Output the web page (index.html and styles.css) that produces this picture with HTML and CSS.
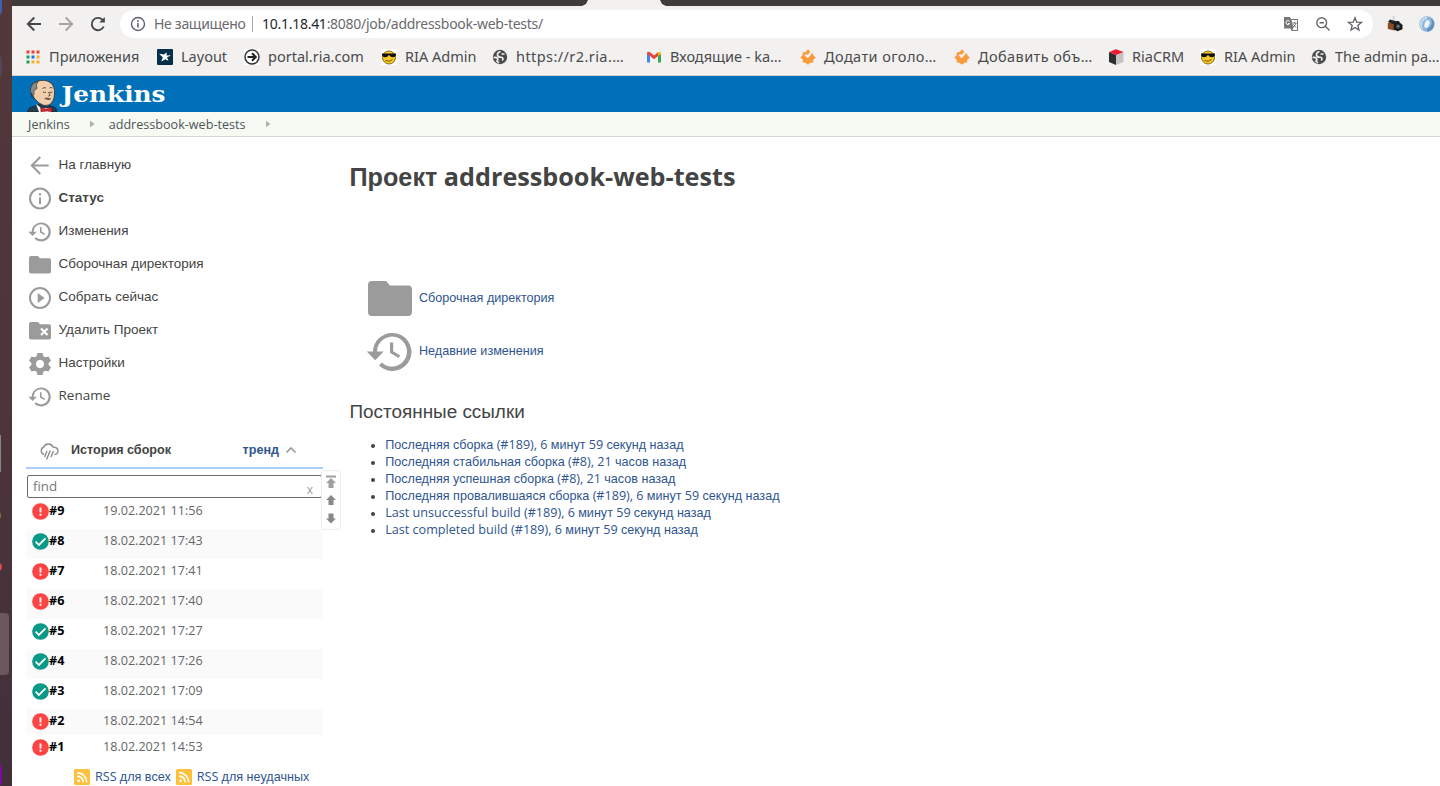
FILE: index.html
```html
<!DOCTYPE html>
<html lang="ru">
<head>
<meta charset="utf-8">
<title>addressbook-web-tests [Jenkins]</title>
<link rel="stylesheet" href="styles.css">
</head>
<body>
<svg width="0" height="0" class="defs">
  <symbol id="history" viewBox="0 0 24 24"><path d="M13 2.500A9.500 9.500 0 0 0 3.500 11.700H.4l4.200 4.400 4.200-4.400H5.500a7.500 7.500 0 1 1 2.400 5.600L6.500 18.700A9.500 9.500 0 1 0 13 2.500zM12 7.200v5.200l4.300 2.600.8-1.300-3.500-2.100V7.200z"/></symbol>
  <symbol id="folder" viewBox="0 0 24 24"><path d="M10 3H3a2 2 0 0 0-2 2v13.500a2 2 0 0 0 2 2h18a2 2 0 0 0 2-2V7.200a2 2 0 0 0-2-2h-9z"/></symbol>
  <symbol id="fail" viewBox="0 0 18 18"><circle cx="9" cy="9" r="8.800" fill="#fd4444"/><path d="M8 4.700h2v5.400H8zM8 11.400h2v2H8z" fill="#fff"/></symbol>
  <symbol id="ok" viewBox="0 0 18 18"><circle cx="9" cy="9" r="8.800" fill="#0a9887"/><path d="M3.800 9.200l3.500 3.400 7-7" fill="none" stroke="#fff" stroke-width="1.900"/></symbol>
  <symbol id="rss" viewBox="0 0 16 16"><rect width="16" height="16" rx="1.500" fill="#ffc03c"/><circle cx="4.600" cy="11.800" r="1.400" fill="#fff"/><path d="M3.200 7.200a6 6 0 0 1 6 6M3.200 3.700a9.500 9.500 0 0 1 9.500 9.500" fill="none" stroke="#fff" stroke-width="1.700"/></symbol>
  <symbol id="shades" viewBox="0 0 16 16"><rect width="16" height="16" fill="#fff"/><circle cx="8" cy="8.500" r="6.500" fill="#f6c928" stroke="#8a6a12"/><path d="M1 4.500h14v1.500c-.5 2.800-5.500 3-6.500.3h-1C6.500 9 1.500 8.800 1 6z" fill="#111"/><path d="M4.500 11.500q4 2 7-1" stroke="#7b4f0a" fill="none"/></symbol>
  <symbol id="globe" viewBox="0 0 16 16"><circle cx="8" cy="8" r="7.200" fill="#4a4b4d"/><path d="M8.500 2.500Q5 3.500 5.500 6t4 2.200q2.500.8.800 3.300M1.500 8.500q3-.5 4 1t-.5 2.500L7 14M9.500 5h3" fill="none" stroke="#f2f1f0" stroke-width="1.600"/></symbol>
  <symbol id="ria" viewBox="0 0 16 16"><path d="M8 .3l2.400 2.400L7.500 6 6 5 4.500 6.600l3.300 2.600L12.600 3.800l1.100 3 2.200 1.800-2.400 2-.4 2.800-2.700.3L8 15.800l-2.700-2-2.600-.4.1-3L.2 8.500 2.500 6.400l.2-2.900 3-.5z" fill="#f99b3c"/></symbol>
</svg>

<div class="screen">
  <aside class="dock">
    <i class="dot blue"></i><i class="dot slate"></i><i class="dot pale"></i><i class="dot gold"></i><i class="dot red"></i><i class="active"></i><i class="dot violet"></i>
  </aside>
  <div class="window">
    <div class="tabs"><div class="tab"></div></div>
    <div class="toolbar">
      <svg class="nav" viewBox="0 0 16 16"><path d="M15 8H2M8.300 1.500L1.800 8l6.500 6.500"/></svg>
      <svg class="nav off" viewBox="0 0 16 16"><path d="M1 8h13M7.700 1.500L14.200 8l-6.500 6.500"/></svg>
      <svg class="nav" viewBox="0 0 16 16"><path d="M13.700 10.500A6.200 6.200 0 1 1 12.400 3.700L14 5.300"/><path d="M14.800 1v5.500H9.300z" class="solid"/></svg>
      <div class="address">
        <svg class="i16" viewBox="0 0 16 16"><circle cx="8" cy="8" r="6.500" fill="none" stroke="#5f6368" stroke-width="1.400"/><path d="M7.200 7h1.600v4.500H7.200zM7.200 4.300h1.600v1.600H7.200z" fill="#5f6368"/></svg>
        <span class="warn">Не защищено</span>
        <span class="url"><b>10.1.18.41</b>:8080/job/addressbook-web-tests/</span>
        <svg class="i16" viewBox="0 0 16 16"><path d="M1 1h6l1 2h7v12H8.500l-1-2.500H1z" fill="#777"/><path d="M8.500 4H14v10H9.500L10.500 12z" fill="#fff"/><path d="M9.500 7h4M11.500 6v1M13 7q-.5 2.500-3 4M10.500 8.500l2.500 3" fill="none" stroke="#666" stroke-width=".9"/><path d="M6.500 5.300a2 2 0 1 0 .2 2.300H5" fill="none" stroke="#fff"/></svg>
        <svg class="i16" viewBox="0 0 16 16"><circle cx="6.700" cy="6.700" r="4.900" fill="none" stroke="#666" stroke-width="1.400"/><path d="M10.300 10.300l4.200 4.200M4.500 6.700h4.500" stroke="#666" stroke-width="1.400"/></svg>
        <svg class="i16" viewBox="0 0 16 16"><path d="M8 1.800l1.700 4.300 4.700.3-3.600 3 1.200 4.600L8 11.500 4 14l1.200-4.600-3.600-3 4.700-.3z" fill="none" stroke="#5f6368" stroke-width="1.300"/></svg>
      </div>
      <svg class="ext" viewBox="0 0 16 16"><path d="M5.500 0h2.500v5H5.500z" fill="#d5d9e2"/><path d="M.8 7l5-1 2 2v6.500l-7-1.500z" fill="#8a4c25"/><path d="M1 6l2-2.500 5 1.500 4 0 1 2-6 1.500z" fill="#222"/><path d="M7 7l7 .3 1.500 2v4l-5 2-4-2z" fill="#1c1d21"/><circle cx="10.800" cy="10.500" r="3.200" fill="#333" stroke="#111"/><circle cx="11.200" cy="10.200" r="1.300" fill="#778"/></svg>
      <svg class="ext" viewBox="0 0 16 16"><circle cx="8" cy="8" r="7.700" fill="#8db5d8"/><path d="M8 .5a7.500 7.500 0 0 0-4 13.500Q1 5 8 3z" fill="#bfd9ed"/><path d="M8 15.500A7.500 7.500 0 0 0 12 2q3 8-4 11z" fill="#5f8fbb"/><ellipse cx="8" cy="8" rx="2.400" ry="4" fill="#eef4fa" transform="rotate(20 8 8)"/></svg>
    </div>
    <nav class="bookmarks">
      <a><svg class="i16" viewBox="0 0 16 16"><path d="M1.500 1.500h3v3h-3zM6.500 1.500h3v3h-3zM11.500 1.500h3v3h-3z" fill="#ea4335"/><path d="M1.500 6.500h3v3h-3zM1.500 11.500h3v3h-3z" fill="#1e9e55"/><path d="M6.500 6.500h3v3h-3z" fill="#1a73e8"/><path d="M11.500 6.500h3v3h-3zM6.500 11.500h3v3h-3zM11.500 11.500h3v3h-3z" fill="#fbb023"/></svg><span>Приложения</span></a>
      <a><svg class="i16" viewBox="0 0 16 16"><rect width="16" height="16" rx="1" fill="#06304a"/><path d="M2 4.800l4.700.6L10 3.500l-.6 3 4.600-.2-4 2.200 1.500 3.300-3.200-1.600L4.300 12.500l1.500-4.300z" fill="#fff"/></svg><span>Layout</span></a>
      <a><svg class="i16" viewBox="0 0 16 16"><rect width="16" height="16" fill="#fff"/><circle cx="8" cy="8" r="7" fill="none" stroke="#333" stroke-width="1.500"/><path d="M3.500 8h8M8 4.200L11.800 8 8 11.800" fill="none" stroke="#222" stroke-width="2"/></svg><span>portal.ria.com</span></a>
      <a><svg class="i16"><use href="#shades"/></svg><span>RIA Admin</span></a>
      <a><svg class="i16"><use href="#globe"/></svg><span class="wide">https://r2.ria.…</span></a>
      <a><svg class="i16" viewBox="0 0 16 16"><path d="M1 4v9.500h3V6z" fill="#4285f4"/><path d="M15 4v9.500h-3V6z" fill="#34a853"/><path d="M1 4.200Q1.500 2 4 3.200L8 6.500l4-3.300V7L8 10.200 4 7 1 5z" fill="#ea4335"/><path d="M12 3.200Q14.500 2 15 4.200V5l-3 2z" fill="#fbbc04"/></svg><span>Входящие - ka…</span></a>
      <a><svg class="i16"><use href="#ria"/></svg><span class="wide">Додати оголо…</span></a>
      <a><svg class="i16"><use href="#ria"/></svg><span class="wide">Добавить объ…</span></a>
      <a><svg class="i16" viewBox="0 0 16 16"><path d="M1 3l7 3v10l-7-3z" fill="#2d2d2d"/><path d="M15.500 3L8 6v10l7.500-3z" fill="#c3c3c3"/><path d="M1 3l7-2.700L15.500 3 8 6z" fill="#ed1b2f"/></svg><span>RiaCRM</span></a>
      <a><svg class="i16"><use href="#shades"/></svg><span>RIA Admin</span></a>
      <a><svg class="i16"><use href="#globe"/></svg><span>The admin pa…</span></a>
    </nav>

    <header class="header">
      <svg class="logo" viewBox="0 0 144 36">
        <path d="M.7 36q0-4.500 6-5.500l5-2 10 1 5 1.500q3 1 3 5z" fill="#213d4f" stroke="#182129" stroke-width=".8"/>
        <path d="M9 28l5 4 7 0 3 0v4H12z" fill="#fff"/>
        <path d="M5 17Q2 7 10 5.500q8-3 14 1.500 4 4 3.500 11-.5 8-5.500 11-5 2-10-2l-5-5z" fill="#f1cfac" stroke="#302b28" stroke-width=".8"/>
        <path d="M11 5.500q-8 1.500-7.500 10l2 4.500 1.500-1.500 0-4 3-2-.5-4z" fill="#8b8b86" stroke="#302b28" stroke-width=".6"/>
        <path d="M5 17q-2 5 2.500 5M15.500 12.500q1.500-1.500 3.500-.5M22.500 12q1.500-1 3 0M16 16q1.500 1 3 .2M22.500 16q1.500 1 3 0M21.500 16l1.700 3.500-2 .6" fill="none" stroke="#302b28" stroke-width=".8"/>
        <path d="M17 23q2-2.500 4.500-1l3 .5q-2.500 2.500-4.500 1z" fill="#6b5444"/>
        <path d="M13.500 31.500l5.500 1.500 5-1.500 1 4.500-5-1-6 1z" fill="#d92532" stroke="#7f1820" stroke-width=".5"/>
        <text x="34.500" y="25.500" textLength="104" lengthAdjust="spacingAndGlyphs">Jenkins</text>
      </svg>
    </header>
    <nav class="crumbs"><a>Jenkins</a><i></i><a>addressbook-web-tests</a><i></i></nav>

    <div class="page">
      <aside class="side">
        <ul class="tasks">
          <li><svg viewBox="0 0 24 24"><path d="M20.700 11.500H4M12.300 3L3.800 11.500l8.500 8.500" class="line"/></svg><a>На главную</a></li>
          <li><svg viewBox="0 0 24 24"><circle cx="12" cy="11.500" r="10" class="line"/><path d="M11 10.500h2V17h-2zM11 6.300h2v2.200h-2z"/></svg><a><strong>Статус</strong></a></li>
          <li><svg><use href="#history"/></svg><a>Изменения</a></li>
          <li><svg><use href="#folder"/></svg><a>Сборочная директория</a></li>
          <li><svg viewBox="0 0 24 24"><circle cx="12" cy="12" r="10" class="line"/><path d="M9.700 7v10l7-5z"/></svg><a>Собрать сейчас</a></li>
          <li><svg viewBox="0 0 24 24"><path d="M10 3H3a2 2 0 0 0-2 2v13.500a2 2 0 0 0 2 2h18a2 2 0 0 0 2-2V7.200a2 2 0 0 0-2-2h-9z"/><path d="M13 9.500l6.500 6.500M19.500 9.500L13 16" stroke="#fff" stroke-width="2.200"/></svg><a>Удалить Проект</a></li>
          <li><svg viewBox="0 0 24 24"><path fill-rule="evenodd" d="M9.500 1h5l.8 3.200 2 1.100 3.200-.9L23 8.700 20.600 11v2l2.400 2.300-2.500 4.300-3.200-.9-2 1.100-.8 3.200h-5l-.8-3.200-2-1.100-3.200.9L1 15.300 3.400 13v-2L1 8.700l2.500-4.300 3.200.9 2-1.100zM12 8a4 4 0 1 0 0 8 4 4 0 0 0 0-8z"/></svg><a>Настройки</a></li>
          <li><svg><use href="#history"/></svg><a class="n">Rename</a></li>
        </ul>

        <section class="history">
          <div class="history-head">
            <svg class="weather" viewBox="0 0 20 18"><path d="M5 11.500A4 4 0 0 1 4.800 4 5 5 0 0 1 14 4q5 .2 5 4 0 3-3.500 3.500M8 8l-2.500 6M11.300 7.500L7.500 16.500M14.500 8L12 14" fill="none" stroke="#8c8c8c" stroke-width="1.400"/></svg>
            <strong>История сборок</strong>
            <a class="trend">тренд</a>
            <svg class="chev" viewBox="0 0 12 8"><path d="M1.500 6.500L6 2l4.500 4.500" fill="none" stroke="#999" stroke-width="1.600"/></svg>
          </div>
          <div class="find n"><span>find</span><span class="clear">x</span></div>
          <div class="pager">
            <svg viewBox="0 0 12 14"><path d="M1 .5h10v2H1zM6 3l5 5H8.500v5h-5V8H1z" fill="#a0a0a0"/></svg>
            <svg viewBox="0 0 12 14"><path d="M6 2l5 5H8.500v5h-5V7H1z" fill="#888"/></svg>
            <svg viewBox="0 0 12 14"><path d="M6 12.500l5-5H8.500v-5h-5v5H1z" fill="#888"/></svg>
          </div>
          <ol class="builds n">
            <li><svg><use href="#fail"/></svg><b>#9</b><span>19.02.2021 11:56</span></li>
            <li><svg><use href="#ok"/></svg><b>#8</b><span>18.02.2021 17:43</span></li>
            <li><svg><use href="#fail"/></svg><b>#7</b><span>18.02.2021 17:41</span></li>
            <li><svg><use href="#fail"/></svg><b>#6</b><span>18.02.2021 17:40</span></li>
            <li><svg><use href="#ok"/></svg><b>#5</b><span>18.02.2021 17:27</span></li>
            <li><svg><use href="#ok"/></svg><b>#4</b><span>18.02.2021 17:26</span></li>
            <li><svg><use href="#ok"/></svg><b>#3</b><span>18.02.2021 17:09</span></li>
            <li class="short"><svg><use href="#fail"/></svg><b>#2</b><span>18.02.2021 14:54</span></li>
            <li class="short"><svg><use href="#fail"/></svg><b>#1</b><span>18.02.2021 14:53</span></li>
          </ol>
          <div class="feeds">
            <svg class="i16"><use href="#rss"/></svg><a><span class="n">RSS </span>для всех</a>
            <svg class="i16"><use href="#rss"/></svg><a><span class="n">RSS </span>для неудачных</a>
          </div>
        </section>
      </aside>

      <main class="main">
        <h1>Проект<span class="n"> addressbook-web-tests</span></h1>
        <div class="shortcuts">
          <a><svg><use href="#folder"/></svg>Сборочная директория</a>
          <a><svg><use href="#history"/></svg>Недавние изменения</a>
        </div>
        <h2>Постоянные ссылки</h2>
        <ul class="links">
          <li><a>Последняя сборка<span class="n"> (#189), 6 </span>минут<span class="n"> 59 </span>секунд назад</a></li>
          <li><a>Последняя стабильная сборка<span class="n"> (#8), 21 </span>часов назад</a></li>
          <li><a>Последняя успешная сборка<span class="n"> (#8), 21 </span>часов назад</a></li>
          <li><a>Последняя провалившаяся сборка<span class="n"> (#189), 6 </span>минут<span class="n"> 59 </span>секунд назад</a></li>
          <li><a><span class="n">Last unsuccessful build (#189), 6 </span>минут<span class="n"> 59 </span>секунд назад</a></li>
          <li><a><span class="n">Last completed build (#189), 6 </span>минут<span class="n"> 59 </span>секунд назад</a></li>
        </ul>
      </main>
    </div>
  </div>
</div>
</body>
</html>
```

FILE: styles.css
```css
* { box-sizing: border-box; }
body { margin: 0; overflow: hidden; background: #fff; color: #444; font: 12.6px/17px "Liberation Sans", Arial, sans-serif; }
ul, ol, h1, h2 { margin: 0; padding: 0; }
ul, ol { list-style: none; }
svg { display: block; flex: none; }
.defs { position: absolute; }
.n { font-family: "Open Sans", "Noto Sans", sans-serif; }
.i16 { width: 16px; height: 16px; }
.screen { display: flex; width: 1440px; height: 786px; }

.dock { position: relative; overflow: hidden; flex: none; width: 12px; background: linear-gradient(#53383b, #4c343a 55%, #41303a); }
.dock .dot { position: absolute; left: -20px; width: 22px; height: 28px; border-radius: 8px; }
.dock .blue { top: -10px; background: #3d62b5; }
.dock .slate { top: 52px; background: #574457; }
.dock .pale { top: 435px; height: 37px; left: -21px; border-radius: 0; background: #8c8588; }
.dock .gold { top: 510px; height: 11px; left: -21px; background: #947044; }
.dock .red { top: 563px; height: 8px; background: #e84850; }
.dock .violet { top: 761px; background: #7d0b9c; }
.dock .active { position: absolute; left: -6px; top: 613px; width: 15px; height: 62px; border-radius: 4px; background: #6a575d; }

.window { flex: 1; min-width: 0; display: flex; flex-direction: column; }
.tabs { flex: none; height: 6px; background: #3e3c38; padding-left: 570px; }
.tab { width: 84px; height: 6px; background: #f2f1f0; clip-path: polygon(6px 0, 78px 0, 80px 4px, 84px 6px, 0 6px, 4px 4px); }
.toolbar { flex: none; height: 36px; display: flex; align-items: center; padding-left: 14px; background: #f2f1f0; }
.nav { width: 16px; height: 16px; margin-right: 16px; fill: none; stroke: #46474a; stroke-width: 1.9; }
.nav.off { stroke: #a5a4a4; }
.nav .solid { fill: #46474a; stroke: none; }
.nav:nth-child(3) { margin-right: 14px; }
.address { display: flex; align-items: center; width: 1253px; height: 28px; padding: 0 10px; border-radius: 14px; background: #fff; font: 14px/20px "Noto Sans", sans-serif; color: #6a6b6d; }
.warn { width: 98px; margin-left: 8px; white-space: nowrap; letter-spacing: -.3px; }
.url { flex: 1; padding-left: 10px; position: relative; white-space: nowrap; letter-spacing: -.27px; }
.url::before { content: ""; position: absolute; left: 0; top: 2px; height: 16px; border-left: 1px solid #aaa; }
.url b { font-weight: 400; color: #26272a; }
.address .i16 + .i16 { margin-left: 16px; }
.ext { width: 16px; height: 16px; margin-left: 14px; }
.ext + .ext { margin-left: 16px; }
.bookmarks { flex: none; height: 34px; display: grid; grid-template-columns: 132px 87px 137px 111px 154px 154px 154px 154px 92px 111px 140px; padding: 0 0 4px 13px; overflow: hidden; background: #f2f1f0; border-bottom: 1px solid #d2d0ce; font: 14.5px/20px "Noto Sans", sans-serif; color: #4a4a4b; }
.bookmarks a { display: flex; align-items: center; gap: 8px; white-space: nowrap; min-width: 0; }
.bookmarks span { padding-bottom: 2px; }
.bookmarks .wide { letter-spacing: .42px; }

.header { flex: none; height: 36px; padding-left: 15px; background: #0071b8; }
.logo { width: 144px; height: 36px; }
.logo text { font: bold 23px "DejaVu Serif", serif; fill: #fff; }
.crumbs { flex: none; display: flex; align-items: center; height: 25px; padding-left: 16px; background: #f6faf2; border-bottom: 1px solid #d3d7cf; color: #4d545d; font-family: "Open Sans", sans-serif; }
.crumbs i { width: 5px; height: 7px; margin: 0 14px 0 20px; background: #b0b0b0; clip-path: polygon(0 0, 100% 50%, 0 100%); }

.page { flex: 1; display: flex; min-height: 0; }
.side { flex: none; width: 337px; padding: 11px 26px 0 14px; }
.tasks li { height: 33px; display: flex; align-items: center; gap: 6.5px; padding-left: 2px; font-size: 13.5px; }
.tasks svg { width: 24px; height: 24px; margin-top: 2px; fill: #9b9b9b; }
.tasks .line { fill: none; stroke: #9b9b9b; stroke-width: 2; }
.history { position: relative; margin-top: 22px; }
.history-head { display: flex; align-items: center; height: 35px; padding: 0 26px 1px 13px; border-bottom: 2px solid #abcdfb; }
.weather { width: 20px; height: 18px; margin: 3px 12px 0 0; }
.trend { margin-left: auto; color: #2f5590; font-weight: 700; }
.chev { width: 12px; height: 8px; margin-left: 6px; }
.find { display: flex; justify-content: space-between; width: 295px; height: 23px; margin: 6px 0 1px 1px; padding: 2px 8px 0 5px; border: 1px solid #6b6b6b; border-radius: 2px; font-size: 13.3px; color: #777; }
.clear { font-size: 12px; padding-top: 3px; color: #999; }
.pager { position: absolute; left: 295px; top: 36px; width: 20px; height: 60px; display: flex; flex-direction: column; align-items: center; gap: 4px; padding-top: 4px; border: 1px solid #eee; border-radius: 3px; background: #fff; }
.pager svg { width: 12px; height: 14px; }
.builds li { display: grid; grid-template-columns: 17px 54px 1fr; align-items: start; height: 30px; padding: 3px 0 0 6px; color: #666; }
.builds li:nth-child(even) { background: #fafafa; }
.builds li.short { height: 26px; }
.builds svg { width: 17px; height: 17px; margin-top: 1px; }
.builds b { color: #000; }
.feeds { display: flex; align-items: center; gap: 5px; height: 32px; padding-left: 48px; color: #2f5590; white-space: nowrap; }

.main { flex: 1; padding: 23px 0 0 .5px; }
h1 { font-size: 25.2px; line-height: 32px; }
.shortcuts { display: flex; flex-direction: column; gap: 6px; margin: 82px 0 0 16px; }
.shortcuts a { display: flex; align-items: center; gap: 5.5px; height: 47px; color: #2f5590; }
.shortcuts svg { width: 48px; height: 48px; fill: #9b9b9b; }
h2 { margin: 25px 0 12px; font-size: 18.9px; line-height: 24px; font-weight: 400; }
.links { padding-left: 35.7px; list-style: disc; }
.links a { color: #2f5590; }
.links li { height: 17px; }
```
